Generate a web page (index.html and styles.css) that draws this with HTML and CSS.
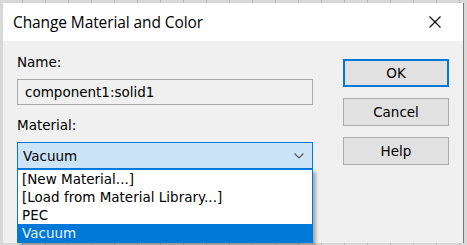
FILE: index.html
```html
<!DOCTYPE html>
<html lang="en">
<head>
  <meta charset="UTF-8">
  <title>Change Material and Color</title>
  <link rel="stylesheet" href="styles.css">
</head>
<body>
  <div class="desk">
    <div class="dialog">
      <div class="titlebar">
        <span class="title">Change Material and Color</span>
        <svg class="close" width="12" height="12" viewBox="0 0 12 12">
          <path d="M0.5 0.5 L11.5 11.5 M11.5 0.5 L0.5 11.5" stroke="#000" stroke-width="1.1" fill="none"/>
        </svg>
      </div>
      <div class="content">
        <div class="fields">
          <label class="label">Name:</label>
          <div class="textbox">component1:solid1</div>
          <label class="label material">Material:</label>
          <div class="combo">
            <div class="combo-value">
              <span>Vacuum</span>
              <svg width="10" height="6" viewBox="0 0 10 6">
                <path d="M0.5 0.5 L5 5 L9.5 0.5" stroke="#5a5a5a" stroke-width="1.2" fill="none"/>
              </svg>
            </div>
            <ul class="droplist">
              <li>[New Material...]</li>
              <li>[Load from Material Library...]</li>
              <li>PEC</li>
              <li class="selected">Vacuum</li>
            </ul>
          </div>
        </div>
        <div class="buttons">
          <button class="btn default">OK</button>
          <button class="btn">Cancel</button>
          <button class="btn">Help</button>
        </div>
      </div>
    </div>
  </div>
</body>
</html>
```

FILE: styles.css
```css
body {
  margin: 0;
  padding: 0;
  background-color: #cfcfcf;
  font-family: "DejaVu Sans", Verdana, sans-serif;
  overflow: hidden;
}
.desk {
  width: 467px;
  height: 245px;
  padding: 3px 4px 2px 3px;
  box-sizing: border-box;
  background: repeating-linear-gradient(90deg, #d8d8d8 0 22px, #b8b8b8 22px 23px);
}
.dialog {
  height: 240px;
  background-color: #f0f0f0;
  box-shadow: 1px 0 0 #777;
}
.titlebar {
  height: 38px;
  background-color: #fff;
  display: flex;
  align-items: center;
  justify-content: space-between;
  padding: 0 22px 0 10px;
}
.title {
  font-family: "Open Sans", "Noto Sans", sans-serif;
  font-size: 15.5px;
  color: #000;
  letter-spacing: -0.1px;
}
.content {
  display: flex;
  padding: 0 0 0 14px;
}
.fields {
  width: 296px;
  display: flex;
  flex-direction: column;
}
.label {
  font-size: 13.5px;
  color: #000;
  margin-top: 13px;
  height: 25px;
}
.label.material {
  margin-top: 12px;
}
.textbox {
  height: 24px;
  border: 1px solid #a9a9a9;
  background-color: #f0f0f0;
  font-size: 13.5px;
  line-height: 24px;
  padding-left: 7px;
}
.combo {
  position: relative;
}
.combo-value {
  height: 25px;
  border: 1px solid #0078d7;
  background-color: #cce4f7;
  font-size: 13.5px;
  display: flex;
  align-items: center;
  justify-content: space-between;
  padding: 0 8px 0 5px;
}
.droplist {
  position: absolute;
  top: 27px;
  left: 0;
  right: 0;
  margin: 0;
  padding: 0;
  list-style: none;
  background-color: #fff;
  border: 1px solid #0078d7;
  box-shadow: 3px 3px 3px rgba(0, 0, 0, 0.3);
  font-size: 13.5px;
}
.droplist li {
  height: 18px;
  line-height: 18px;
  padding-left: 4px;
}
.droplist li.selected {
  background-color: #0078d7;
  color: #e8f2fc;
}
.buttons {
  margin-left: 30px;
  padding-top: 18px;
  display: flex;
  flex-direction: column;
  gap: 11px;
}
.btn {
  width: 106px;
  height: 28px;
  background-color: #e1e1e1;
  border: 1px solid #adadad;
  font-family: "DejaVu Sans", Verdana, sans-serif;
  font-size: 13.5px;
  color: #000;
  padding: 0;
}
.btn.default {
  border: 2px solid #0078d7;
}
```
